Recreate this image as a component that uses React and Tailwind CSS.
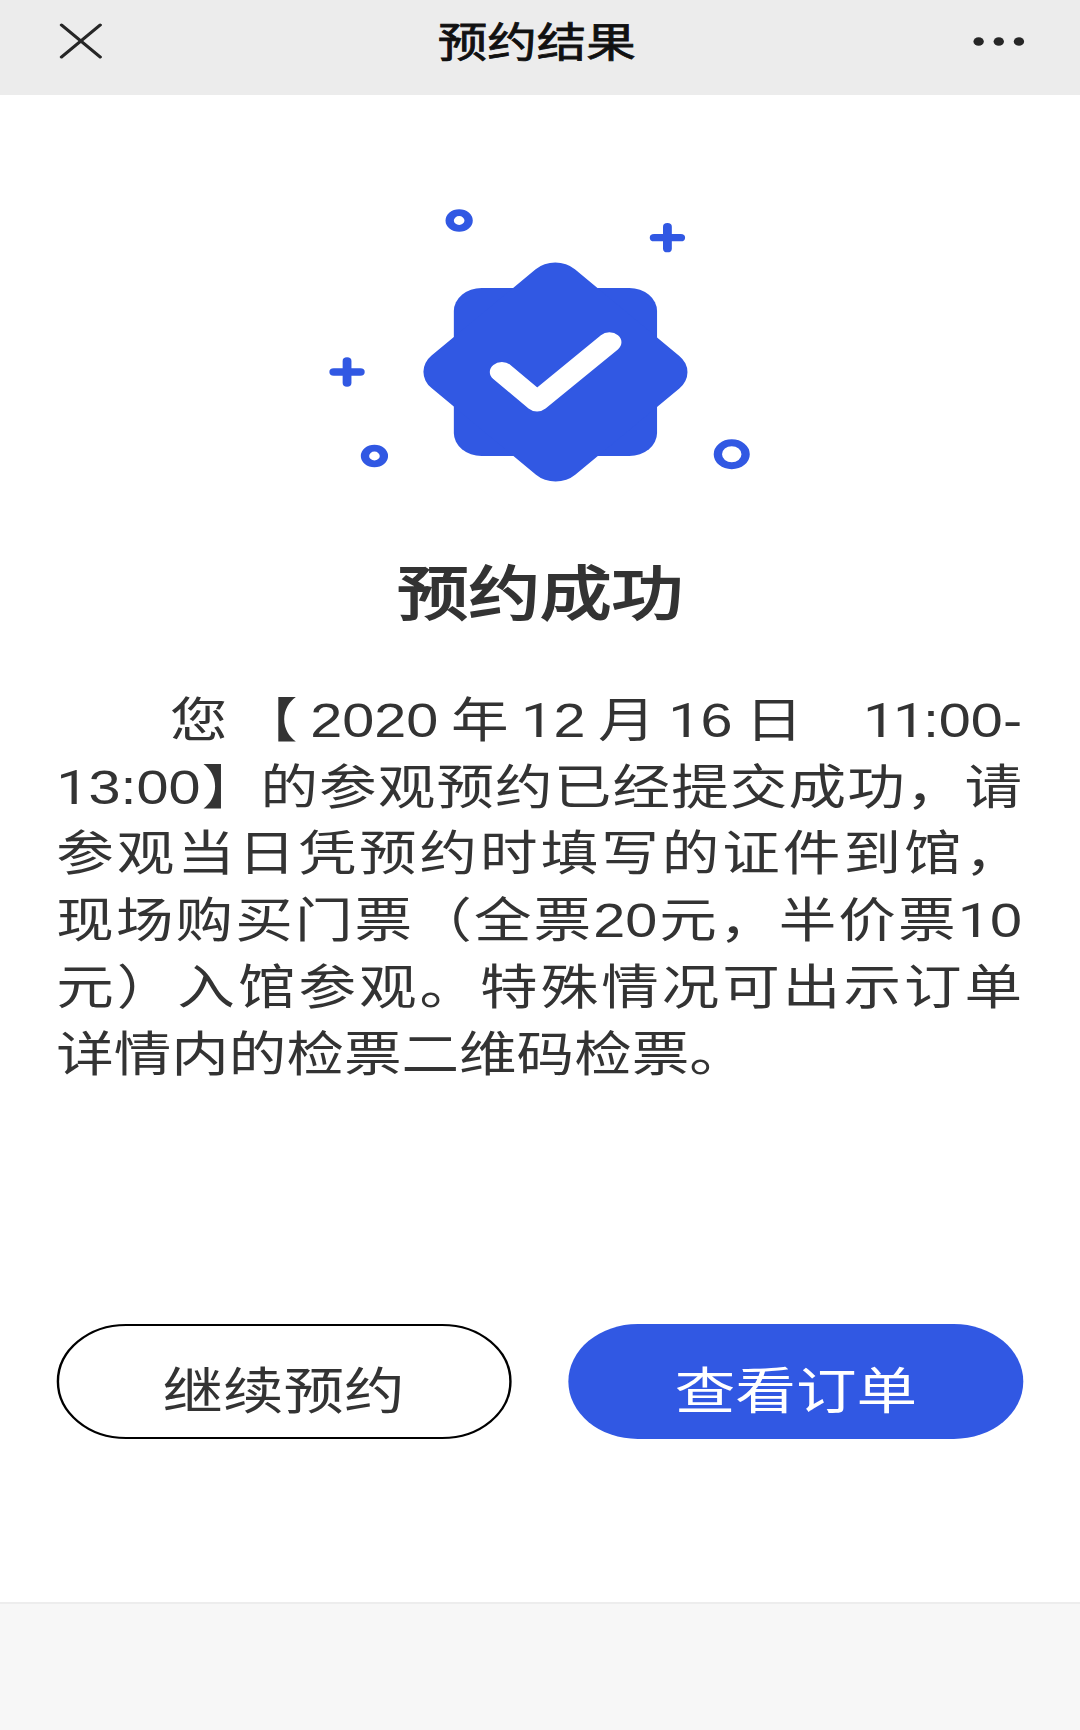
import { Fragment } from 'react';

const LINES = [
  '您【2020年12月16日\u00a0 11:00-',
  '13:00】的参观预约已经提交成功，请',
  '参观当日凭预约时填写的证件到馆，',
  '现场购买门票（全票20元，半价票10',
  '元）入馆参观。特殊情况可出示订单',
  '详情内的检票二维码检票。',
];

// Sets the digit one in a face whose "1" has no foot; a pair of ones is kerned tighter.
function PlainOnes({ text }) {
  return text.split(/(1+)/).map((part, i) =>
    part.startsWith('1') ? (
      <span key={i} className={part.length > 1 ? 'font-[Roboto] tracking-[-2px]' : 'font-[Roboto]'}>
        {part}
      </span>
    ) : (
      <Fragment key={i}>{part}</Fragment>
    )
  );
}

function Header() {
  return (
    <header className="flex h-[94.5px] items-start justify-between bg-[#ececec] pl-[48.7px] pr-[46px]">
      <svg className="mt-[23px] h-[36px] w-[36px]" viewBox="0 0 36 36" fill="none" stroke="#262626" strokeWidth="2.9" strokeLinecap="round">
        <path d="M2 2 L34 34 M34 2 L2 34" />
      </svg>
      <h1 className="mt-[13px] text-[41px] font-normal leading-[60px] text-[#111111] [-webkit-text-stroke:0.8px_#111111]">预约结果</h1>
      <svg className="mt-[36px] h-[11px] w-[44px]" viewBox="0 0 44 11" fill="#262626">
        <circle cx="6" cy="5.5" r="4.3" />
        <circle cx="22.7" cy="5.5" r="4.3" />
        <circle cx="39.4" cy="5.5" r="4.3" />
      </svg>
    </header>
  );
}

function SuccessBadge() {
  return (
    <svg className="mt-[95.3px] ml-[257px] block h-[310px] w-[381px]" viewBox="0.3 0 381 310" fill="none">
      <g fill="#3158e3">
        <rect x="119.4" y="98" width="168.4" height="168" rx="23" />
        <rect x="119.4" y="98" width="168.4" height="168" rx="23" transform="rotate(45 203.6 182)" />
      </g>
      <path d="M159.2 182 L188.4 211.5 L248.3 152.3" stroke="#fff" strokeWidth="20" strokeLinecap="round" strokeLinejoin="round" />
      <g stroke="#3158e3" strokeWidth="7.3" strokeLinecap="round">
        <path d="M285.4 47.7 H307.4 M296.4 36.7 V58.7" />
        <path d="M19.9 182 H41.9 M30.9 171 V193" />
      </g>
      <g stroke="#3158e3" strokeWidth="6.9">
        <circle cx="123.8" cy="30.5" r="7.85" />
        <circle cx="53.6" cy="266" r="7.85" />
        <circle cx="349.7" cy="264.3" r="11.5" />
      </g>
    </svg>
  );
}

export default function App() {
  return (
    <div className="h-[1730px] w-[1080px] overflow-hidden bg-white">
      <div
        lang="zh-CN"
        className="flex h-[1730px] w-[895px] origin-top-left scale-x-[1.2067] flex-col bg-white font-['Liberation_Sans','Noto_Sans_CJK_SC',sans-serif] text-[#333333]"
      >
        <Header />
        <SuccessBadge />
        <h2 className="mt-[51px] text-center text-[59.3px] font-normal leading-[88px] [-webkit-text-stroke:1.8px_#333333]">预约成功</h2>
        <div className="ml-[46.6px] mr-[48px] mt-[49px] text-[47.7px] leading-[66.8px]">
          {LINES.map((line, i) => (
            <p
              key={line}
              className={
                i === 0
                  ? 'h-[66.8px] whitespace-nowrap indent-[94.2px] [text-align-last:justify] [word-spacing:-4px]'
                  : i === LINES.length - 1
                    ? 'h-[66.8px] whitespace-nowrap'
                    : 'h-[66.8px] whitespace-nowrap [text-align-last:justify]'
              }
            >
              <PlainOnes text={line} />
            </p>
          ))}
        </div>
        <div className="ml-[46.5px] mr-[47.2px] mt-[235px] flex justify-between text-[50.2px]">
          <button className="h-[115px] w-[377px] rounded-full border-[2px] border-black pt-[23px] leading-none">继续预约</button>
          <button className="h-[115px] w-[376.5px] rounded-full bg-[#3158e3] pt-[23px] leading-none text-white">查看订单</button>
        </div>
        <footer className="mt-auto h-[128px] border-t-2 border-[#ededed] bg-[#f7f7f7]" />
      </div>
    </div>
  );
}
